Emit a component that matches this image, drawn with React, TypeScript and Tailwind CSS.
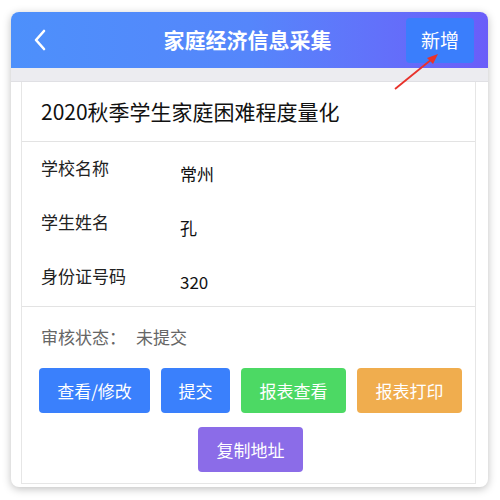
import React from "react";

const font = { fontFamily: '"Noto Sans CJK SC", "Noto Sans", sans-serif' };

const Row = ({ label, value }: { label: string; value: string }) => (
  <div className="flex items-start h-[54px]">
    <div className="w-[139px] text-[17px] leading-[24px] text-[#222]">{label}</div>
    <div className="mt-[6px] text-[17px] leading-[24px] text-[#111]">{value}</div>
  </div>
);

const Btn = ({ text, color, w }: { text: string; color: string; w: string }) => (
  <button className={`${color} ${w} h-[45px] rounded-[4px] text-white text-[17px]`}>{text}</button>
);

export default function App() {
  return (
    <div className="relative w-[500px] h-[500px] bg-white" style={font}>
      <div className="absolute left-[11px] top-[12px] w-[477px] h-[475px] rounded-[8px] overflow-hidden bg-white shadow-[0_2px_8px_rgba(0,0,0,0.25)] flex flex-col">
        <header className="h-[56px] shrink-0 flex items-center bg-gradient-to-r from-[#4d90fb] via-[#5586fb] to-[#6a5df9]">
          <svg width="14" height="22" viewBox="0 0 14 22" className="ml-[22px]">
            <path d="M11 2 L3 11 L11 20" stroke="white" strokeWidth="2.6" fill="none" strokeLinecap="round" strokeLinejoin="round" />
          </svg>
          <div className="flex-1 text-center text-white text-[21px] font-semibold pl-[42px]">家庭经济信息采集</div>
          <div className="mr-[14px] w-[68px] h-[45px] rounded-[4px] bg-[#3a7efc] flex items-center justify-center text-white text-[19px]">新增</div>
        </header>
        <div className="h-[14px] shrink-0 bg-[#ececf0] border-b border-[#e0e0e4]" />
        <div className="flex-1 pl-[10px] pr-[12px] pb-[3px]">
          <div className="h-full border border-t-0 border-[#e6e6e6] flex flex-col">
            <div className="h-[60px] flex items-center pl-[19px] text-[21px] text-[#111] border-b border-[#e3e3e3]">
              2020秋季学生家庭困难程度量化
            </div>
            <div className="pl-[19px] pt-[14px] h-[165px] border-b border-[#e3e3e3]">
              <Row label="学校名称" value="常州" />
              <Row label="学生姓名" value="孔" />
              <Row label="身份证号码" value="320" />
            </div>
            <div className="pl-[19px] pt-[18px] text-[17px] leading-[24px] text-[#666]">
              审核状态：<span className="ml-[10px]">未提交</span>
            </div>
            <div className="flex justify-center gap-[11px] mt-[19px] pl-[4px]">
              <Btn text="查看/修改" color="bg-[#3a80fc]" w="w-[111px]" />
              <Btn text="提交" color="bg-[#3a80fc]" w="w-[69px]" />
              <Btn text="报表查看" color="bg-[#4cd964]" w="w-[105px]" />
              <Btn text="报表打印" color="bg-[#f0ad4e]" w="w-[105px]" />
            </div>
            <div className="flex justify-center mt-[14px] pl-[4px]">
              <Btn text="复制地址" color="bg-[#8b6ce8]" w="w-[105px]" />
            </div>
          </div>
        </div>
      </div>
      <svg className="absolute left-0 top-0 pointer-events-none" width="500" height="500">
        <line x1="395" y1="89" x2="432" y2="59" stroke="#e8322b" strokeWidth="1.8" />
        <path d="M438 54 L427 58 L433 64 Z" fill="#e8322b" />
      </svg>
    </div>
  );
}
